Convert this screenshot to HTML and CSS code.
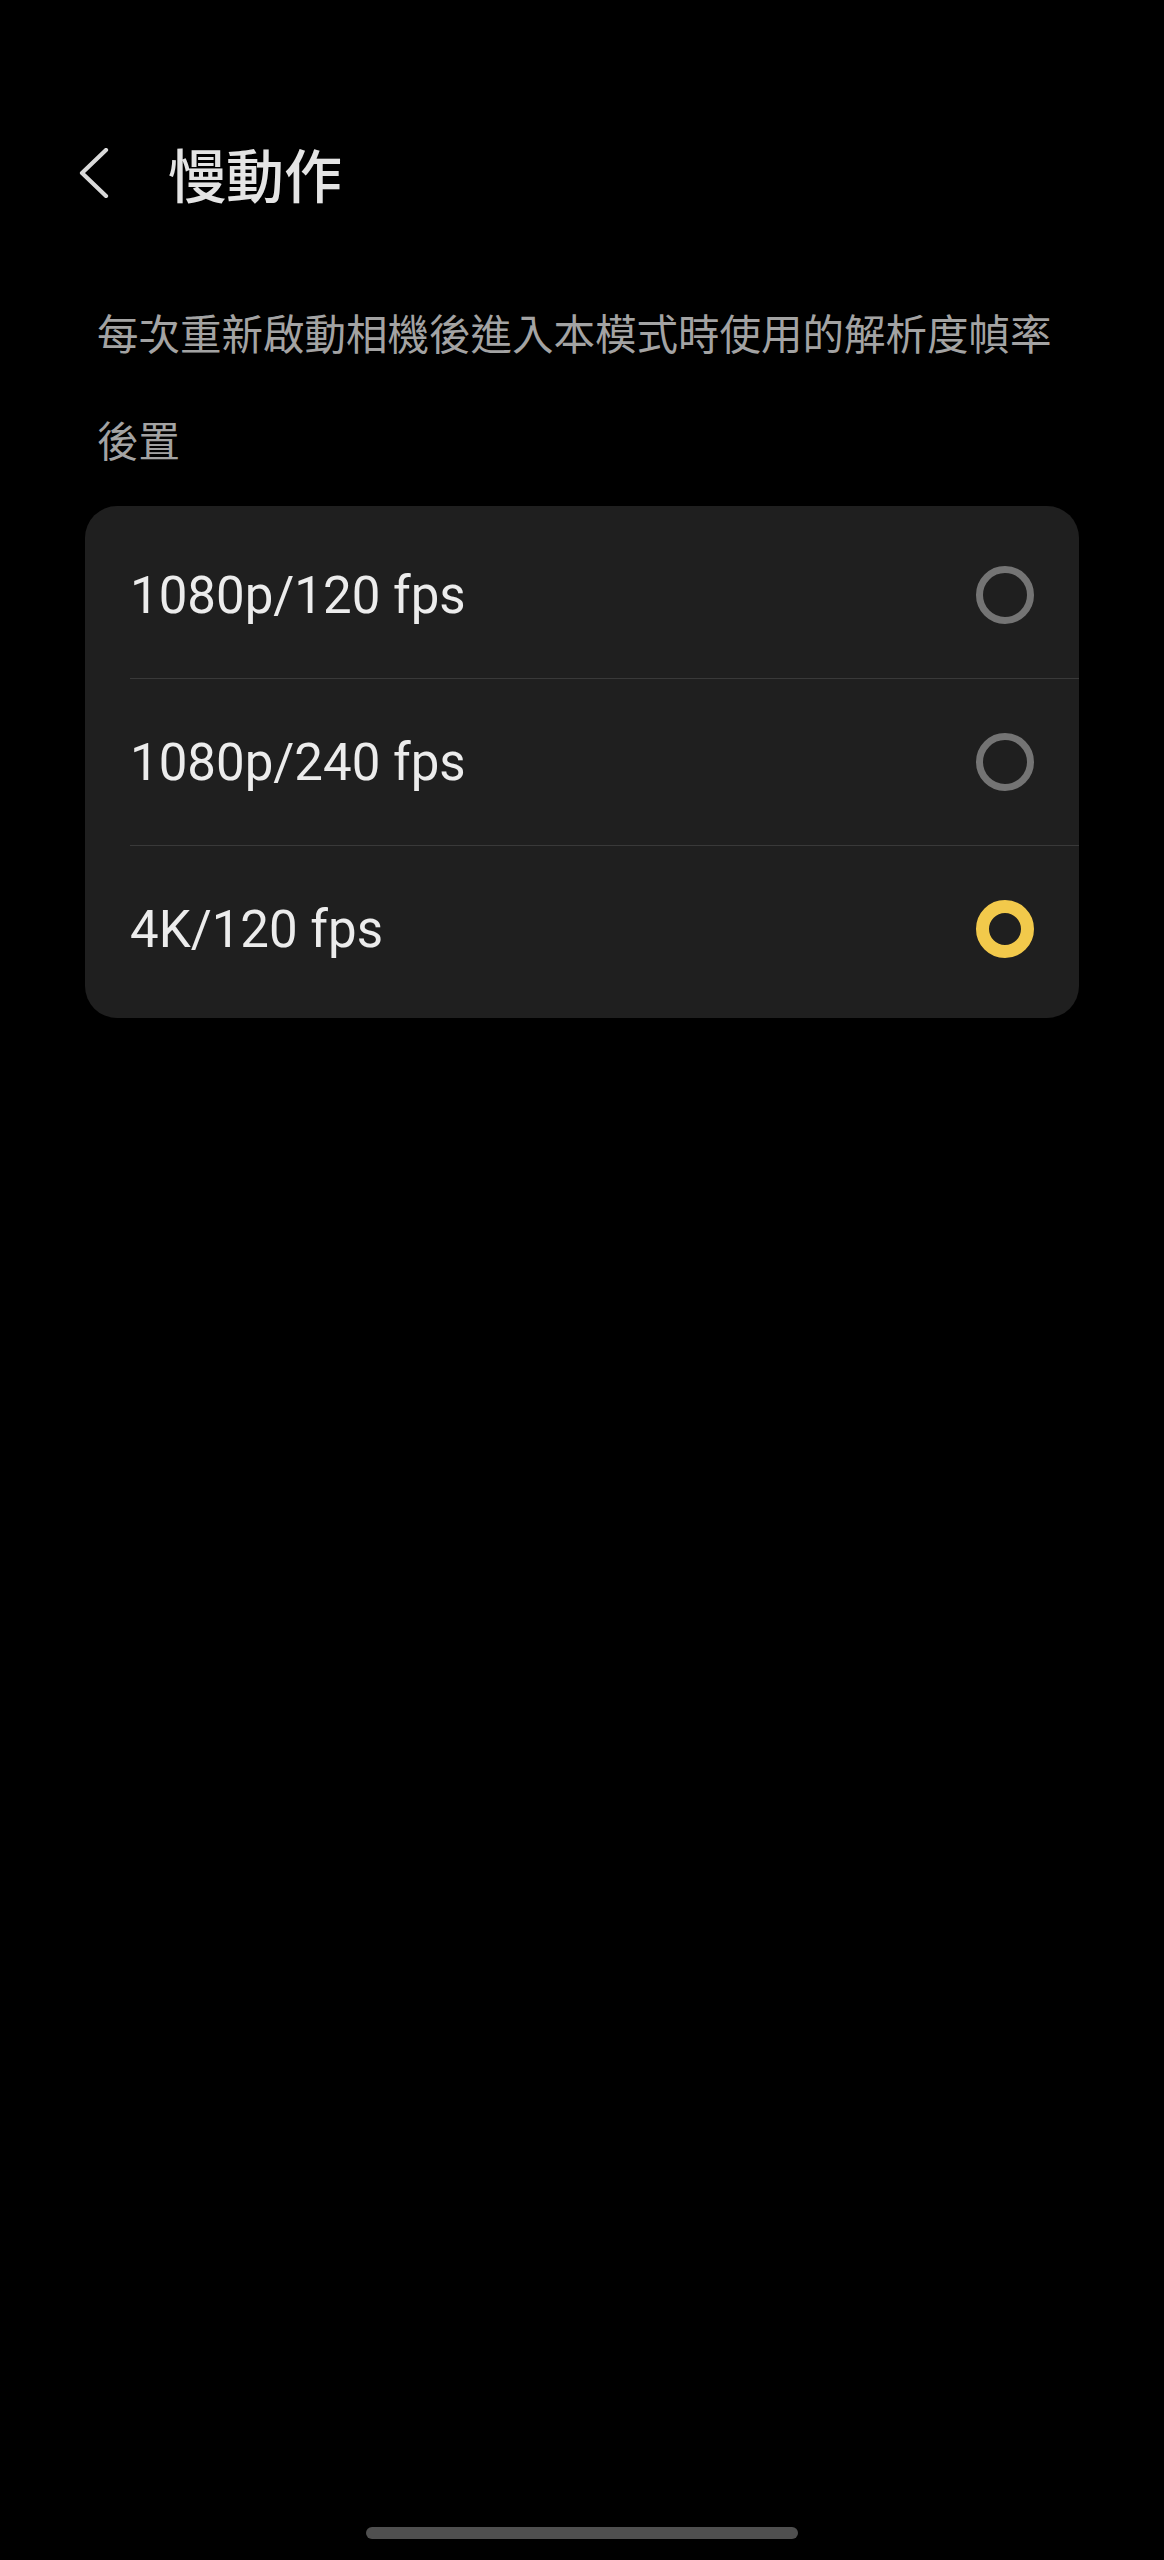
FILE: index.html
```html
<!DOCTYPE html>
<html lang="zh-Hant">
<head>
<meta charset="utf-8">
<title>慢動作</title>
<link rel="stylesheet" href="styles.css">
</head>
<body>
<div class="page">
  <header class="header">
    <svg class="back" viewBox="0 0 32 50" width="32" height="50" aria-hidden="true">
      <path d="M28 2 L4 25 L28 48" fill="none" stroke="#dadada" stroke-width="4.2" stroke-linecap="round" stroke-linejoin="round"/>
    </svg>
    <h1 class="title">慢動作</h1>
  </header>
  <p class="desc">每次重新啟動相機後進入本模式時使用的解析度幀率</p>
  <p class="label">後置</p>
  <div class="card">
    <div class="row"><span class="opt">1080p/120 fps</span><span class="radio"></span></div>
    <div class="row"><span class="opt">1080p/240 fps</span><span class="radio"></span></div>
    <div class="row"><span class="opt">4K/120 fps</span><span class="radio radio-on"></span></div>
  </div>
  <div class="homebar"></div>
</div>
</body>
</html>
```

FILE: styles.css
```css
html, body {
  margin: 0;
  padding: 0;
  background: #000;
}
.page {
  min-height: 2560px;
  display: flex;
  flex-direction: column;
  font-family: "Noto Sans CJK TC", "Noto Sans", sans-serif;
}
.header {
  margin-top: 118px;
  height: 110px;
  display: flex;
  align-items: center;
  padding-left: 78px;
}
.back {
  display: block;
  flex: none;
}
.title {
  margin: 0 0 0 58px;
  font-size: 58px;
  line-height: 110px;
  font-weight: 500;
  color: #e4e4e4;
}
.desc {
  margin: 74px 0 0 0;
  padding-left: 97px;
  font-size: 41.5px;
  line-height: 60px;
  color: #a3a3a3;
  white-space: nowrap;
}
.label {
  margin: 47px 0 0 0;
  padding-left: 97px;
  font-size: 41.5px;
  line-height: 60px;
  color: #a3a3a3;
}
.card {
  margin: 37px 85px 0 85px;
  background: #1f1f1f;
  border-radius: 32px;
  padding: 6px 0;
}
.row {
  height: 166px;
  margin-left: 45px;
  padding-right: 45px;
  display: flex;
  align-items: center;
  justify-content: space-between;
}
.row + .row {
  border-top: 1px solid #393939;
}
.opt {
  font-family: Roboto, "Noto Sans", sans-serif;
  font-size: 51px;
  line-height: 1;
  color: #ececec;
}
.radio {
  width: 58px;
  height: 58px;
  box-sizing: border-box;
  border-radius: 50%;
  border: 7px solid #747474;
  flex: none;
}
.radio-on {
  border: 13.5px solid #f2c94b;
}
.homebar {
  margin: auto auto 21px auto;
  width: 432px;
  height: 12px;
  border-radius: 6px;
  background: #4f4f4f;
}
```
